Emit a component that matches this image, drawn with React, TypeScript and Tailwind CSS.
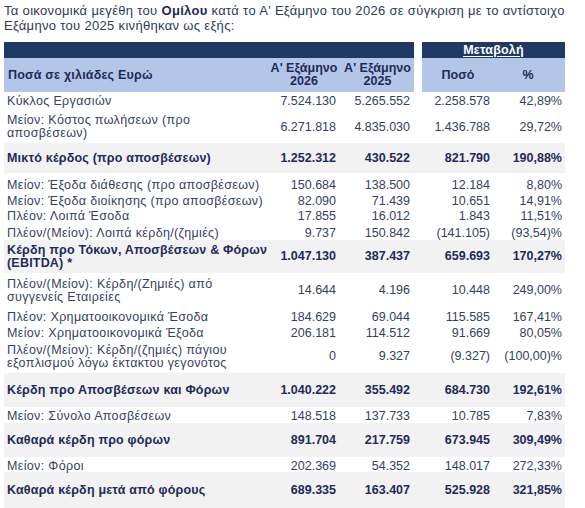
type Row = {
  label: string[]
  v: string[]
  bold?: boolean
  h: string
}

const rows: Row[] = [
  { label: ['Κύκλος Εργασιών'], v: ['7.524.130', '5.265.552', '2.258.578', '42,89%'], h: 'h-[19px]' },
  { label: ['Μείον: Κόστος πωλήσεων (προ', 'αποσβέσεων)'], v: ['6.271.818', '4.835.030', '1.436.788', '29,72%'], h: 'h-[32px]' },
  { label: ['Μικτό κέρδος (προ αποσβέσεων)'], bold: true, v: ['1.252.312', '430.522', '821.790', '190,88%'], h: 'h-[30px]' },
  { label: ['Μείον: Έξοδα διάθεσης (προ αποσβέσεων)'], v: ['150.684', '138.500', '12.184', '8,80%'], h: 'h-[19px] pt-[3px]' },
  { label: ['Μείον: Έξοδα διοίκησης (προ αποσβέσεων)'], v: ['82.090', '71.439', '10.651', '14,91%'], h: 'h-[15px]' },
  { label: ['Πλέον: Λοιπά Έσοδα'], v: ['17.855', '16.012', '1.843', '11,51%'], h: 'h-[17px]' },
  { label: ['Πλέον/(Μείον): Λοιπά κέρδη/(ζημιές)'], v: ['9.737', '150.842', '(141.105)', '(93,54)%'], h: 'h-[16px]' },
  { label: ['Κέρδη προ Τόκων, Αποσβέσεων & Φόρων', '(EBITDA) *'], bold: true, v: ['1.047.130', '387.437', '659.693', '170,27%'], h: 'h-[33px]' },
  { label: ['Πλέον/(Μείον): Κέρδη/(Ζημιές) από', 'συγγενείς Εταιρείες'], v: ['14.644', '4.196', '10.448', '249,00%'], h: 'h-[35px]' },
  { label: ['Πλέον: Χρηματοοικονομικά Έσοδα'], v: ['184.629', '69.044', '115.585', '167,41%'], h: 'h-[16px]' },
  { label: ['Μείον: Χρηματοοικονομικά Έξοδα'], v: ['206.181', '114.512', '91.669', '80,05%'], h: 'h-[16px]' },
  { label: ['Πλέον/(Μείον): Κέρδη/(ζημιές) πάγιου', 'εξοπλισμού λόγω έκτακτου γεγονότος'], v: ['0', '9.327', '(9.327)', '(100,00)%'], h: 'h-[33px]' },
  { label: ['Κέρδη προ Αποσβέσεων και Φόρων'], bold: true, v: ['1.040.222', '355.492', '684.730', '192,61%'], h: 'h-[34px]' },
  { label: ['Μείον: Σύνολο Αποσβέσεων'], v: ['148.518', '137.733', '10.785', '7,83%'], h: 'h-[16px]' },
  { label: ['Καθαρά κέρδη προ φόρων'], bold: true, v: ['891.704', '217.759', '673.945', '309,49%'], h: 'h-[34px]' },
  { label: ['Μείον: Φόροι'], v: ['202.369', '54.352', '148.017', '272,33%'], h: 'h-[15px]' },
  { label: ['Καθαρά κέρδη μετά από φόρους'], bold: true, v: ['689.335', '163.407', '525.928', '321,85%'], h: 'h-[36px]' },
]

const cols = 'grid grid-cols-[266px_68px_76px_8px_70px_73px]'

export default function App() {
  return (
    <div className="w-[585px] h-[508px] bg-white overflow-hidden font-['Liberation_Sans',Arial,sans-serif] text-[#36415f]">
      {/* Intro */}
      <p className="px-[4px] pt-[3px] text-[13px] leading-[15px] tracking-[0.32px] whitespace-nowrap text-[#2e3a5c]">
        Τα οικονομικά μεγέθη του <b className="text-[#1f2a5a]">Ομίλου</b> κατά το Α' Εξάμηνο του 2026 σε σύγκριση με το αντίστοιχο
        <br />
        Εξάμηνο του 2025 κινήθηκαν ως εξής:
      </p>

      <div className="mt-[9px] ml-[4px] w-[561px]">
        {/* Header */}
        <div className={`${cols} h-[16px]`}>
          <div className="col-span-3 bg-[#1f3864]" />
          <div />
          <div className="col-span-2 bg-[#1f3864] flex items-end justify-center">
            <span className="text-white font-bold text-[12.5px] leading-[15px] tracking-[0.2px] underline underline-offset-[2px] decoration-1">
              Μεταβολή
            </span>
          </div>
        </div>
        <div className={`${cols} h-[34px] text-[12.5px] font-bold text-[#1f2a5a] leading-[13px]`}>
          <div className="bg-[#b4c6e7] flex items-center pl-[4px] tracking-[0.2px]">Ποσά σε χιλιάδες Ευρώ</div>
          <div className="bg-[#b4c6e7] flex flex-col items-center justify-center text-center">
            <span>Α' Εξάμηνο</span>
            <span>2026</span>
          </div>
          <div className="bg-[#b4c6e7] flex flex-col items-center justify-center text-center pl-[3px]">
            <span>Α' Εξάμηνο</span>
            <span>2025</span>
          </div>
          <div />
          <div className="bg-[#b4c6e7] flex items-center justify-center pl-[2px]">Ποσό</div>
          <div className="bg-[#b4c6e7] flex items-center justify-center pr-[1px]">%</div>
        </div>

        {/* Body */}
        {rows.map((r, i) => (
          <div
            key={i}
            className={`${cols} ${r.h} text-[12.5px] ${r.bold ? 'bg-[#f2f2f2] font-bold text-[#1f2a5a]' : 'bg-white'}`}
          >
            <div
              className={`flex flex-col justify-center pl-[3px] leading-[13px] whitespace-nowrap ${r.bold ? 'tracking-[0.2px]' : 'tracking-[0.35px]'}`}
            >
              {r.label.map((l, j) => (
                <span key={j}>{l}</span>
              ))}
            </div>
            <div className="flex items-center justify-end pr-[2px]">{r.v[0]}</div>
            <div className="flex items-center justify-end pr-[4px]">{r.v[1]}</div>
            <div />
            <div className="flex items-center justify-end pr-[2px]">{r.v[2]}</div>
            <div className="flex items-center justify-end pr-[3px]">{r.v[3]}</div>
          </div>
        ))}
      </div>
    </div>
  )
}
